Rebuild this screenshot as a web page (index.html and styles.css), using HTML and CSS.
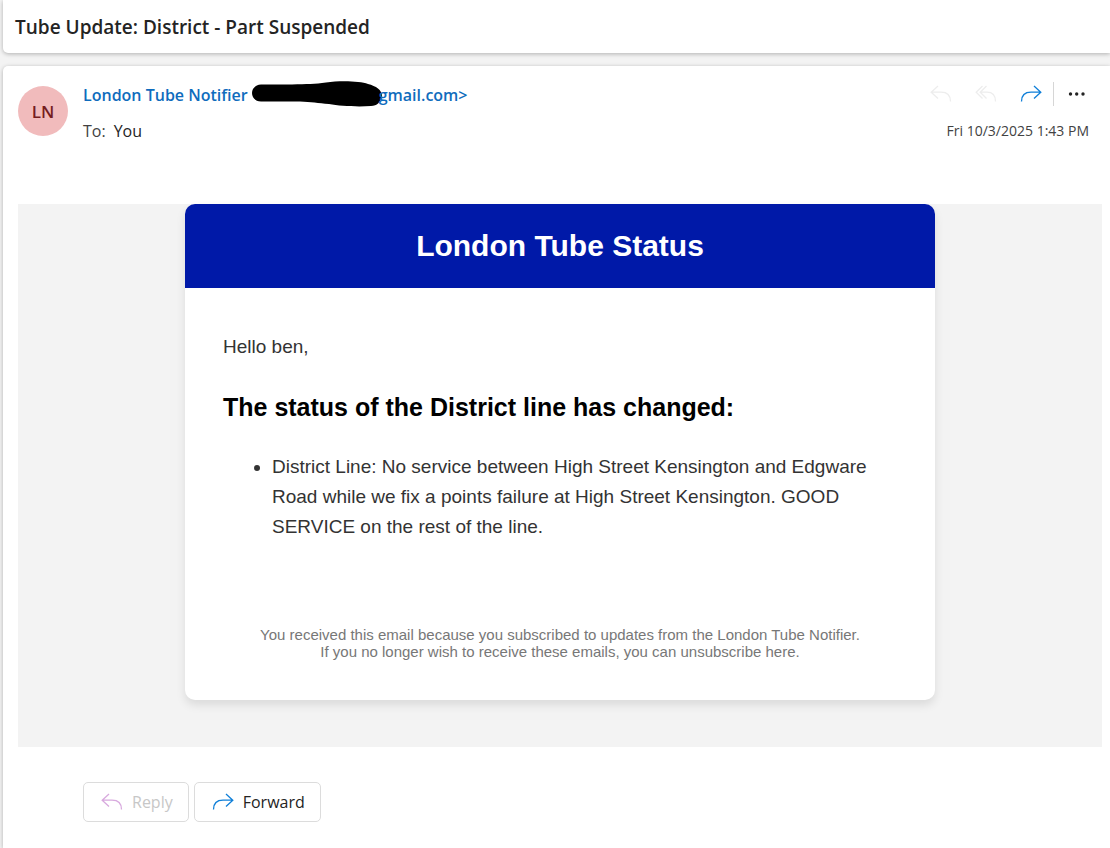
FILE: index.html
```
<!DOCTYPE html>
<html lang="en">
<head>
<meta charset="utf-8">
<title>Tube Update: District - Part Suspended</title>
<link rel="stylesheet" href="styles.css">
</head>
<body>
<svg class="sprite" aria-hidden="true">
  <symbol id="reply" viewBox="0 0 22 18"><path d="M8 1 1.200 7.200 8 13.500M1.500 7.200H11C17 7.200 20.500 10 20.500 16.500"/></symbol>
  <symbol id="reply-all" viewBox="0 0 22 18"><path d="M7.500 1 1.200 7.200 7.500 13.500M11.500 1 5.200 7.200 11.500 13.500M5.500 7.200H12C17.500 7.200 20.500 10 20.500 16.500"/></symbol>
  <symbol id="forward" viewBox="0 0 22 18"><path d="M14 1 20.800 7.200 14 13.500M20.500 7.200H11C5 7.200 1.500 10 1.500 16.500"/></symbol>
</svg>
<main class="reader">
  <header class="panel subject">
    <h1 class="subject-title">Tube Update: District - Part Suspended</h1>
  </header>
  <article class="panel message">
    <div class="message-head">
      <div class="avatar">LN</div>
      <div class="people">
        <div class="sender">
          <span>London Tube Notifier</span>
          <svg class="redaction" width="130" height="26" viewBox="0 0 130 26" role="img" aria-label="Address hidden"><path d="M9 3.500H40C55 3 63 3 74 1.500C88-.500 108 0 116 3C124 5 130 9 130 15C129 21 125 25 119 25C105 26 88 25 77 23C66 22 59 21 48 20.500H9C-3 20-3 4 9 3.500Z"/></svg>
          <span>gmail.com&gt;</span>
        </div>
        <div class="recipients"><span class="label">To:</span><span>You</span></div>
      </div>
      <div class="meta">
        <div class="actions">
          <button class="icon-button" aria-label="Reply" disabled><svg class="icon"><use href="#reply"/></svg></button>
          <button class="icon-button" aria-label="Reply all" disabled><svg class="icon"><use href="#reply-all"/></svg></button>
          <button class="icon-button accent" aria-label="Forward"><svg class="icon"><use href="#forward"/></svg></button>
          <span class="divider"></span>
          <button class="icon-button more" aria-label="More actions"><svg width="18" height="4" viewBox="0 0 18 4"><circle cx="2.500" cy="2" r="1.700"/><circle cx="8.700" cy="2" r="1.700"/><circle cx="15" cy="2" r="1.700"/></svg></button>
        </div>
        <time class="date" datetime="2025-10-03T13:43">Fri 10/3/2025 1:43 PM</time>
      </div>
    </div>
    <div class="mail">
      <section class="mail-card">
        <div class="mail-banner"><h2 class="mail-title">London Tube Status</h2></div>
        <div class="mail-body">
          <p class="greeting">Hello ben,</p>
          <h3 class="status-title">The status of the District line has changed:</h3>
          <ul class="status-list">
            <li>District Line: No service between High Street Kensington and Edgware Road while we fix a points failure at High Street Kensington. GOOD SERVICE on the rest of the line.</li>
          </ul>
        </div>
        <footer class="mail-footer">
          <p>You received this email because you subscribed to updates from the London Tube Notifier.</p>
          <p>If you no longer wish to receive these emails, you can unsubscribe here.</p>
        </footer>
      </section>
    </div>
    <div class="responses">
      <button class="response" disabled><svg class="icon"><use href="#reply"/></svg>Reply</button>
      <button class="response accent"><svg class="icon"><use href="#forward"/></svg><span>Forward</span></button>
    </div>
  </article>
</main>
</body>
</html>
```
FILE: styles.css
```
* { box-sizing: border-box; }
body {
  margin: 0;
  background: #f3f3f3;
  color: #242424;
  font-family: "Segoe UI", "Open Sans", sans-serif;
}
h1, h2, h3, p, ul { margin: 0; }
button { font: inherit; cursor: pointer; }
button:disabled { cursor: default; }
.sprite { display: none; }
.reader {
  display: flex;
  flex-direction: column;
  gap: 13px;
  min-height: 100vh;
  padding-left: 3px;
}
.panel {
  background: #fff;
  box-shadow: 0 1px 4px rgba(0, 0, 0, .28);
}
.subject {
  padding: 13px 12px 12px;
  border-radius: 0 0 0 5px;
}
.subject-title { font-size: 19px; line-height: 28px; font-weight: 600; }
.message {
  flex: 1;
  padding: 15px 8px 26px 15px;
  border-radius: 5px 0 0 0;
}
.message-head { display: flex; min-height: 123px; }
.avatar {
  display: grid;
  place-items: center;
  width: 50px;
  height: 50px;
  margin: 5px 15px 0 0;
  border-radius: 50%;
  background: #f1bbbc;
  color: #751d1f;
  font-size: 17px;
  font-weight: 600;
}
.people { flex: 1; }
.sender {
  display: flex;
  align-items: center;
  height: 28px;
  color: #0f6cbd;
  font-size: 16px;
  font-weight: 600;
  white-space: nowrap;
}
.redaction { flex: none; margin: 0 -3px 3px 4px; }
.recipients { display: flex; gap: 8px; margin-top: 10px; font-size: 16px; line-height: 24px; }
.label { color: #424242; }
.meta { display: flex; flex-direction: column; align-items: flex-end; padding-right: 13px; }
.actions { display: flex; align-items: center; height: 26px; }
.icon { width: 22px; height: 18px; fill: none; stroke: currentColor; stroke-width: 1.300; }
.icon-button {
  display: grid;
  place-items: center;
  width: 45px;
  height: 26px;
  padding: 0;
  border: 0;
  background: none;
  color: #ededed;
}
.accent .icon { color: #0f7fd8; }
.divider { width: 1px; height: 24px; background: #d6d6d6; }
.more { width: 36px; margin-left: 5px; margin-right: -6px; fill: #242424; }
.date { margin-top: 12px; color: #424242; font-size: 14px; line-height: 24px; }
.mail {
  padding-bottom: 47px;
  background: #f3f3f3;
  font-family: Arial, "Liberation Sans", sans-serif;
}
.mail-card {
  max-width: 750px;
  margin: 0 auto;
  border-radius: 10px;
  background: #fff;
  box-shadow: 0 5px 10px rgba(0, 0, 0, .1);
}
.mail-banner {
  padding: 24px;
  border-radius: 10px 10px 0 0;
  background: #0019a8;
  color: #fff;
  text-align: center;
}
.mail-title { font-size: 30px; line-height: 36px; }
.mail-body { padding: 44px 38px 0; color: #333; font-size: 19px; line-height: 30px; }
.status-title { margin-top: 30px; color: #000; font-size: 25px; }
.status-list { margin-top: 30px; padding-left: 49px; }
.mail-footer { padding: 84px 38px 40px; color: #777; font-size: 15px; line-height: 17px; text-align: center; }
.responses { display: flex; gap: 5px; padding: 35px 0 0 65px; }
.response {
  display: flex;
  align-items: center;
  gap: 9px;
  height: 40px;
  padding: 0 15px 0 17px;
  border: 1px solid #dcdcdc;
  border-radius: 5px;
  background: #fff;
  color: #242424;
  font-size: 16px;
}
.response:disabled { color: #c7c7c7; }
.response:disabled .icon { color: #d8a9de; }
```
